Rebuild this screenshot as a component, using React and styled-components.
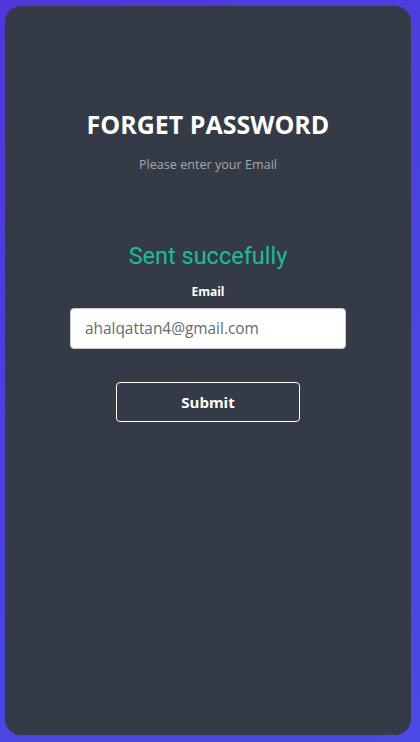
import styled, { createGlobalStyle } from 'styled-components'

const GlobalStyle = createGlobalStyle`
  html, body {
    margin: 0;
    padding: 0;
  }
  body {
    font-family: "Open Sans", "Noto Sans", sans-serif;
  }
  * { box-sizing: border-box; }
`

function App() {
  return <>
    <GlobalStyle />
    <Page>
      <Card>
        <Title>FORGET PASSWORD</Title>
        <Subtitle>Please enter your Email</Subtitle>
        <Form onSubmit={(e) => e.preventDefault()}>
          <Success>Sent succefully</Success>
          <Label htmlFor='email'>Email</Label>
          <Input id='email' type='email' defaultValue='ahalqattan4@gmail.com' />
          <SubmitButton type='submit'>Submit</SubmitButton>
        </Form>
      </Card>
    </Page>
  </>
}

const Page = styled.div`
  width: 420px;
  height: 742px;
  padding: 6px 9px 7px 5px;
  background: linear-gradient(135deg, #5036d8 0%, #4a44e0 55%, #4a4ae4 100%);
`
const Card = styled.div`
  height: 100%;
  background: #343a46;
  border-radius: 16px;
  display: flex;
  flex-direction: column;
  align-items: center;
  padding-top: 101px;
`
const Title = styled.h1`
  margin: 0;
  font-size: 25px;
  font-weight: 700;
  color: #ffffff;
  line-height: 34px;
`
const Subtitle = styled.p`
  margin: 15px 0 0;
  font-size: 12.6px;
  color: #a3a8b0;
  line-height: 18px;
`
const Form = styled.form`
  display: flex;
  flex-direction: column;
  align-items: center;
  margin-top: 68px;
`
const Success = styled.h3`
  margin: 0;
  font-family: Roboto, "Noto Sans", sans-serif;
  font-weight: 400;
  font-size: 23.5px;
  color: #1abc9c;
  line-height: 28px;
`
const Label = styled.label`
  margin-top: 14px;
  font-size: 12px;
  font-weight: 700;
  color: #ffffff;
  line-height: 16px;
`
const Input = styled.input`
  margin-top: 8px;
  width: 276px;
  height: 41px;
  border: 1px solid #c8ccd2;
  border-radius: 4px;
  padding: 0 14px;
  font-family: "Open Sans", "Noto Sans", sans-serif;
  font-size: 15.4px;
  color: #666a70;
  background: #ffffff;
  outline: none;
`
const SubmitButton = styled.button`
  margin-top: 33px;
  width: 184px;
  height: 40px;
  background: transparent;
  border: 1px solid #ffffff;
  border-radius: 4px;
  color: #ffffff;
  font-family: "Open Sans", "Noto Sans", sans-serif;
  font-size: 15px;
  font-weight: 700;
  cursor: pointer;
`

export default App
